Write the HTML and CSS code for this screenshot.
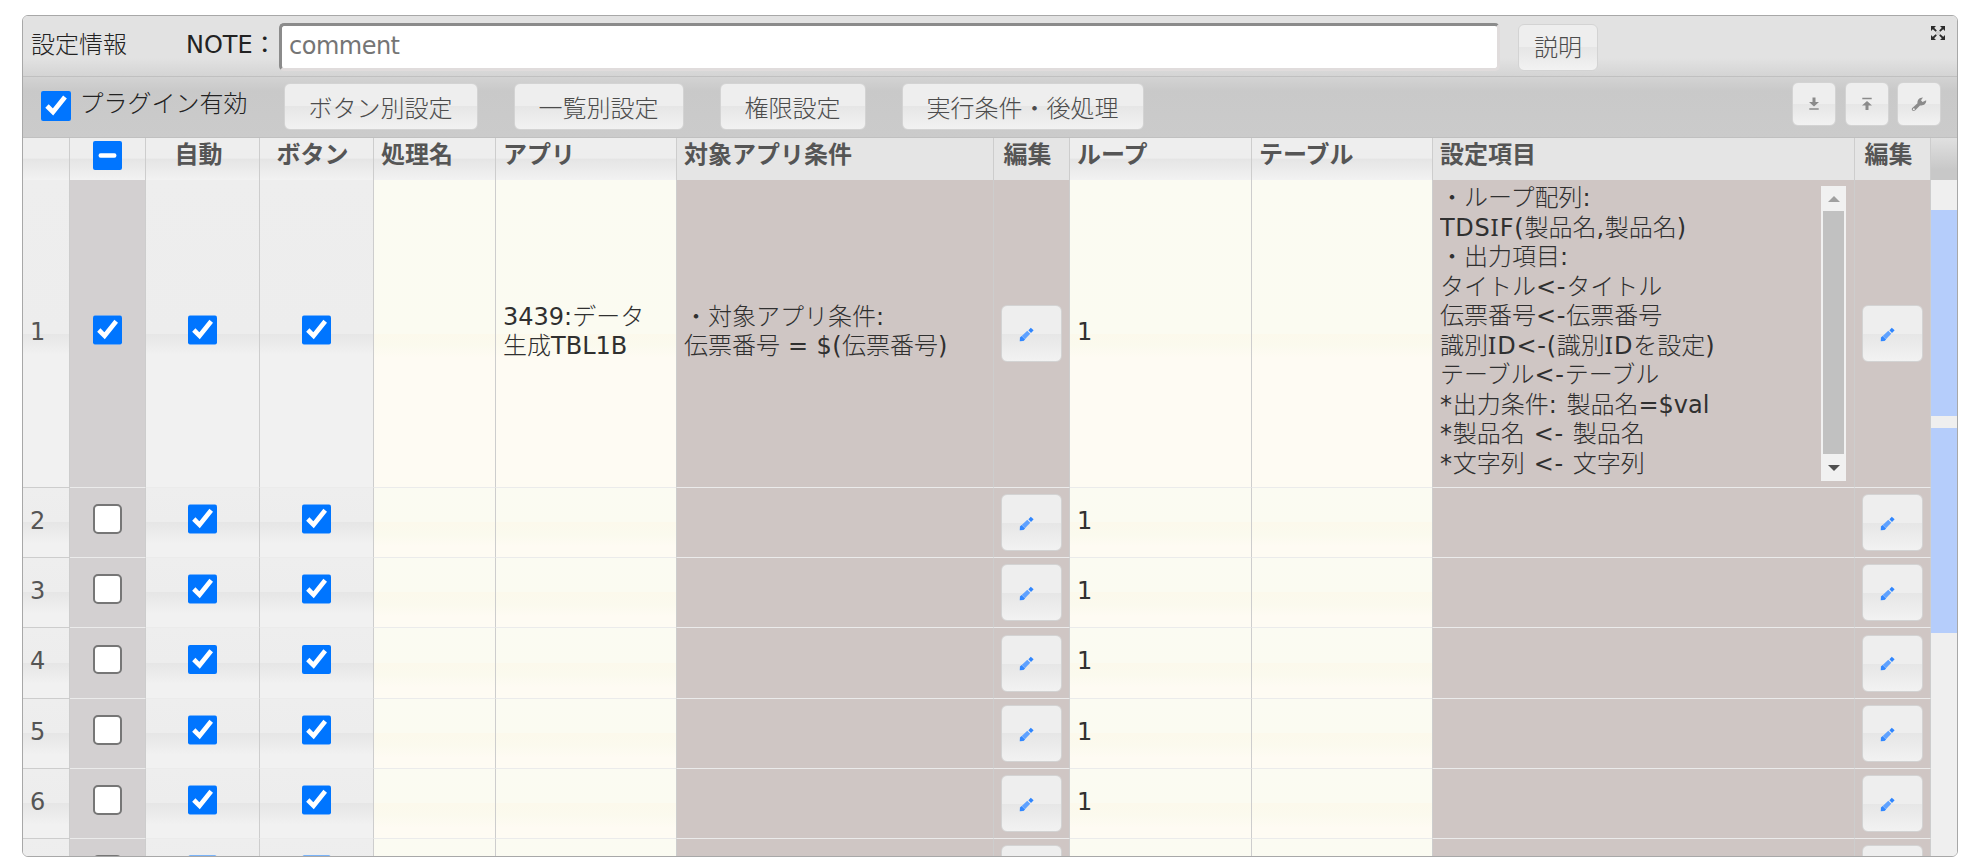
FILE: index.html
```
<!DOCTYPE html>
<html lang="ja">
<head>
<meta charset="utf-8">
<title>設定情報</title>
<link rel="stylesheet" href="styles.css">
</head>
<body>
<svg class="defs" width="0" height="0" aria-hidden="true">
  <symbol id="pencil" viewBox="0 0 16 16">
    <path d="M.8 15.200 L1 11.300 L4.700 14.900 Z M1 11.200 L2.700 9.500 L6.500 13.200 L4.800 14.900 Z" fill="#2f86ff"/>
    <path d="M2.900 9.500 L8.800 4 L12 7.100 L6.400 13 Z" fill="#5ea1ff"/>
    <path d="M10 3.400 L12.600 .7 L15.600 3.500 L12.800 6.300 Z" fill="#2f86ff"/>
  </symbol>
</svg>
<main class="panel">
  <header class="titlebar">
    <span class="title">設定情報</span>
    <label class="note" for="note">NOTE：</label>
    <input class="note-input" id="note" type="text" placeholder="comment">
    <button class="btn btn-help">説明</button>
    <svg class="expand" viewBox="0 0 14 14" width="14" height="14">
      <path d="M0 0H5L0 5Z M14 0V5L9 0Z M0 14V9L5 14Z M14 14H9L14 9Z" fill="#2b2b2b"/>
      <path d="M2 2 5.200 5.200M12 2 8.800 5.200M2 12 5.200 8.800M12 12 8.800 8.800" stroke="#2b2b2b" stroke-width="1.800"/>
      <circle cx="6" cy="6" r=".5" fill="#777"/><circle cx="8" cy="6" r=".5" fill="#777"/><circle cx="6" cy="8" r=".5" fill="#777"/><circle cx="8" cy="8" r=".5" fill="#777"/>
    </svg>
  </header>
  <div class="toolbar">
    <input class="check" id="enabled" type="checkbox" checked>
    <label class="enable" for="enabled">プラグイン有効</label>
    <div class="actions">
      <button class="btn">ボタン別設定</button>
      <button class="btn">一覧別設定</button>
      <button class="btn">権限設定</button>
      <button class="btn">実行条件・後処理</button>
    </div>
    <div class="tools">
      <button class="btn btn-icon" aria-label="ダウンロード"><svg width="14" height="14" viewBox="0 0 14 14"><path d="M5.500 .5h3v4.500H12L7 9.500 2 5h3.500zM2.300 11.300h9.400v1.500H2.300z" fill="#8b8b8b"/></svg></button>
      <button class="btn btn-icon" aria-label="アップロード"><svg width="14" height="14" viewBox="0 0 14 14"><path d="M2.300 .8h9.400v1.500H2.300zM5.500 13h3V8.500H12L7 4 2 8.500h3.500z" fill="#8b8b8b"/></svg></button>
      <button class="btn btn-icon" aria-label="設定"><svg width="16" height="16" viewBox="0 0 16 16"><path d="M1 12.300 L6.500 7.300 C6 4.500 8.200 1.500 12 1.600 L10 4.300 L11.500 6 L15.200 4.300 C15.500 8 12.500 10 9 9.400 L4 14.600 C2 15.800 0 14 1 12.300Z" fill="#8b8b8b"/><circle cx="2.800" cy="13.200" r="1" fill="#ededed"/></svg></button>
    </div>
  </div>
  <div class="grid">
    <div class="row head">
      <div class="cell"></div>
      <div class="cell pick"><input class="check" id="pick-all" type="checkbox"></div>
      <div class="cell mid">自動</div>
      <div class="cell mid">ボタン</div>
      <div class="cell">処理名</div>
      <div class="cell">アプリ</div>
      <div class="cell flat">対象アプリ条件</div>
      <div class="cell flat mid">編集</div>
      <div class="cell">ループ</div>
      <div class="cell">テーブル</div>
      <div class="cell flat">設定項目</div>
      <div class="cell flat mid">編集</div>
      <div class="gutter-head"></div>
    </div>
    <div class="body">
      <div class="rows" id="rows">
        <div class="row first">
          <div class="cell num">1</div>
          <div class="cell pick"><input class="check" type="checkbox" checked></div>
          <div class="cell box"><input class="check" type="checkbox" checked></div>
          <div class="cell box"><input class="check" type="checkbox" checked></div>
          <div class="cell cream"></div>
          <div class="cell cream two"><div><b>3439:</b>データ<br>生成<b>TBL1B</b></div></div>
          <div class="cell mauve cond two"><div>・対象アプリ条件<b>:</b><br>伝票番号<b> = $(</b>伝票番号<b>)</b></div></div>
          <div class="cell mauve edit"><button class="btn btn-edit" aria-label="編集"><svg class="pencil"><use href="#pencil"/></svg></button></div>
          <div class="cell cream"><b>1</b></div>
          <div class="cell cream"></div>
          <div class="cell mauve items">
            <div class="lines">・ループ配列<b>:</b><br><b>TDS<span class="slab">I</span>F(</b>製品名<b>,</b>製品名<b>)</b><br>・出力項目<b>:</b><br>タイトル<b>&lt;-</b>タイトル<br>伝票番号<b>&lt;-</b>伝票番号<br>識別<b><span class="slab">I</span>D&lt;-(</b>識別<b><span class="slab">I</span>D</b>を設定<b>)</b><br>テーブル<b>&lt;-</b>テーブル<br><b>*</b>出力条件<b>: </b>製品名<b class="tight">=$val</b><br><b>*</b>製品名<b> &lt;- </b>製品名<br><b>*</b>文字列<b> &lt;- </b>文字列</div>
            <div class="bar"><i class="up"></i><i class="thumb"></i><i class="down"></i></div>
          </div>
          <div class="cell mauve edit"><button class="btn btn-edit" aria-label="編集"><svg class="pencil"><use href="#pencil"/></svg></button></div>
        </div>
      </div>
      <div class="gutter"><i></i><i></i></div>
    </div>
  </div>
</main>
<script src="script.js"></script>
</body>
</html>
```
FILE: styles.css
```
* { box-sizing: border-box; }
body {
  margin: 0;
  padding: 15px 23px 10px 22px;
  background: #fff;
  color: #222;
  font: 24px/29.5px "DejaVu Sans", "Noto Sans CJK JP", sans-serif;
  font-weight: 300;
  overflow: hidden;
}
.defs { position: absolute; }
/* Latin runs sit one weight above the light Japanese text */
b { font-weight: 400; white-space: pre; }
.slab { font-family: "Noto Sans", sans-serif; letter-spacing: 1.2px; line-height: 0; }
.panel {
  width: 1936px;
  height: 842px;
  border: 1px solid #a8a8a8;
  border-radius: 6px;
  overflow: hidden;
  display: flex;
  flex-direction: column;
}
.titlebar {
  height: 61px;
  flex: none;
  display: flex;
  align-items: flex-start;
  padding: 7px 12px 0 8px;
  border-bottom: 1px solid #c0c0c0;
  background: linear-gradient(#e2e2e2 70%, #d4d4d4);
}
.title, .note { line-height: 45px; white-space: nowrap; }
.title { width: 155px; }
.note { width: 93px; font-weight: 400; }
.note-input {
  width: 1221px;
  height: 48px;
  border: 3px solid;
  border-color: #8b8b8b #e0dcdc #e0dcdc #8b8b8b;
  border-radius: 5px;
  padding: 0 7px 2px;
  background: #fff;
  font: inherit;
  font-weight: 400;
  letter-spacing: -.5px;
  outline: 0;
}
.note-input::placeholder { color: #757575; }
.btn {
  border: 1px solid #d3d3d3;
  border-radius: 6px;
  background: linear-gradient(#eee 0 50%, #e6e6e6 50%, #f2f2f2);
  color: #4c4c4c;
  font: inherit;
  white-space: nowrap;
  padding: 0 24px;
}
.btn-help { width: 80px; height: 47px; padding: 2px 0 0; margin: 1px 0 0 18px; }
.expand { margin: 3px 0 0 auto; }
.toolbar {
  height: 61px;
  flex: none;
  display: flex;
  align-items: flex-start;
  padding: 5px 16px 0 18px;
  border-bottom: 1px solid #c0c0c0;
  background: linear-gradient(#d3d3d3, #c9c9c9 14px, #cbcbcb);
}
.check { width: 29.5px; height: 29.5px; margin: 0; flex: none; }
.check:not(:checked):not(:indeterminate) {
  appearance: none;
  border: 2px solid #767676;
  border-radius: 5px;
  background: #fff;
}
.toolbar .check { margin-top: 9px; }
.enable { line-height: 44px; margin-left: 9px; width: 204px; }
.actions { display: flex; gap: 36px; padding-top: 1px; }
.actions .btn { height: 47px; padding-top: 6px; }
.tools { display: flex; gap: 8.500px; margin-left: auto; }
.btn-icon { width: 44px; height: 44px; padding: 0; display: grid; place-items: center; }
.grid { flex: 1; min-height: 0; display: flex; flex-direction: column; }
.row {
  display: grid;
  grid-template-columns: 47px 76px 114px 114px 122px 181px 317px 76px 182px 181px 422px 76px 26px;
  height: 70px;
}
.rows .row { grid-template-columns: 47px 76px 114px 114px 122px 181px 317px 76px 182px 181px 422px 76px; }
.cell {
  border-right: 1px solid #cdcdcd;
  border-bottom: 1px solid #ebebeb;
  padding: 0 0 2px 7px;
  color: #303030;
  display: flex;
  align-items: center;
  min-width: 0;
  white-space: nowrap;
}
.head { height: 42px; flex: none; }
.head .cell {
  border-bottom: 0;
  padding: 0 0 7px 7px;
  color: #555;
  font-weight: 700;
  background: linear-gradient(#eee 0 48%, #e5e5e5 50%, #f2f2f2);
}
.head .flat { background: #e5e5e5; }
.head .mid { justify-content: center; padding: 0 8px 7px 0; }
.gutter-head { background: linear-gradient(#e0e0e0, #c8c8c8 75%); }
.body { flex: 1; min-height: 0; display: flex; overflow: hidden; }
.rows { flex: none; width: 1908px; }
.first { height: 308px; }
.tall { height: 71px; }
.num, .box { background: linear-gradient(#eee, #ededed 50%, #e6e6e6 50%, #f1f1f1 calc(50% + 21px)); }
.num { color: #555; font-weight: 400; border-bottom-color: #cdcdcd; }
.box, .rows .pick, .head .pick { justify-content: center; padding: 0 0 7px; }
.rows .pick { background: #d3d0d1; }
.cream { background: linear-gradient(#fbfbf2, #fbfbf1 50%, #fcf9ec 50%, #fbfaee calc(50% + 12px), #fefbf3 calc(50% + 24px)); }
.two { padding-bottom: 3px; }
.mauve { background: #cfc6c4; }
.cond b { letter-spacing: .4px; }
.edit { padding: 0; justify-content: center; }
.btn-edit { width: 61px; height: 57px; padding: 1px 11px 0 0; display: grid; place-items: center; }
.pencil { width: 15px; height: 15px; display: block; }
.items { align-items: flex-start; justify-content: space-between; padding: 6px 8px 0 7px; }
.lines { height: 297px; overflow: hidden; margin-top: -2px; }
.lines b { letter-spacing: .7px; word-spacing: .6px; }
.lines .tight { letter-spacing: 0; }
.bar {
  width: 25px;
  height: 295px;
  background: #f1f1f1;
  display: flex;
  flex-direction: column;
  align-items: center;
  padding: 10px 0;
}
.bar .thumb { width: 21px; height: 243px; background: #c1c1c1; margin: 9px 0 11px; }
.up, .down { border: solid transparent; border-width: 0 6px; }
.up { border-bottom: 6px solid #a0a0a0; }
.down { border-top: 6px solid #505050; }
.gutter { width: 26px; background: #efefef; padding-top: 30px; display: flex; flex-direction: column; gap: 12px; }
.gutter i { height: 205.500px; background: #b5cdfb; }
```
FILE: script.js
```
document.getElementById('pick-all').indeterminate = true;

const check = (on) => `<input class="check" type="checkbox"${on ? ' checked' : ''}>`;
const edit = '<div class="cell mauve edit"><button class="btn btn-edit" aria-label="編集"><svg class="pencil"><use href="#pencil"/></svg></button></div>';

const rows = document.getElementById('rows');
// The last row is only a sliver at the panel's lower edge, so it carries no text.
for (let n = 2; n <= 7; n++) {
  const sliver = n === 7;
  rows.insertAdjacentHTML('beforeend', `
    <div class="row${n === 4 ? ' tall' : ''}">
      <div class="cell num">${sliver ? '' : n}</div>
      <div class="cell pick">${check(false)}</div>
      <div class="cell box">${check(true)}</div>
      <div class="cell box">${check(true)}</div>
      <div class="cell cream"></div>
      <div class="cell cream"></div>
      <div class="cell mauve"></div>
      ${edit}
      <div class="cell cream">${sliver ? '' : '<b>1</b>'}</div>
      <div class="cell cream"></div>
      <div class="cell mauve"></div>
      ${edit}
    </div>`);
}
```
